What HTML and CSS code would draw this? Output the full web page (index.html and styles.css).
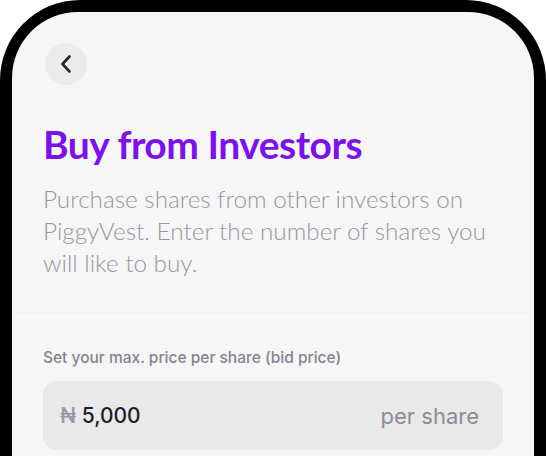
FILE: index.html
```html
<!DOCTYPE html>
<html>
<head>
<meta charset="utf-8">
<link rel="stylesheet" href="styles.css">
</head>
<body>
<div class="phone">
  <div class="screen">
    <div class="header">
      <button class="back" aria-label="Back">
        <svg width="14" height="20" viewBox="0 0 14 20"><path d="M10.5 2.5 L3.5 10 L10.5 17.5" fill="none" stroke="#232838" stroke-width="2.6" stroke-linecap="round" stroke-linejoin="round"/></svg>
      </button>
      <h1 class="title">Buy from Investors</h1>
      <p class="subtitle">Purchase shares from other investors on PiggyVest. Enter the number of shares you will like to buy.</p>
    </div>
    <div class="form">
      <label class="label">Set your max. price per share (bid price)</label>
      <div class="field">
        <span class="amount"><span class="naira">₦</span> 5,000</span>
        <span class="unit">per share</span>
      </div>
    </div>
  </div>
</div>
</body>
</html>
```
FILE: styles.css
```css
html, body {
  margin: 0;
  padding: 0;
  background: #ffffff;
  height: 100%;
  overflow: hidden;
}
.phone {
  background: #000;
  border-radius: 80px 80px 0 0;
  padding: 12px 12px 0 12px;
  height: 456px;
  box-sizing: border-box;
}
.screen {
  background: #f6f6f6;
  border-radius: 66px 66px 0 0;
  height: 100%;
  overflow: hidden;
}
.header {
  padding: 31px 31px 0 31px;
  height: 301px;
  box-sizing: border-box;
  border-bottom: 1px solid #f1f1f1;
}
.back {
  width: 42px;
  height: 42px;
  border-radius: 50%;
  border: none;
  background: #ebebeb;
  display: flex;
  align-items: center;
  justify-content: center;
  padding: 0;
  margin: 0 0 0 2px;
}
.title {
  margin: 35px 0 0 0;
  font-family: "Lato", sans-serif;
  font-weight: 700;
  font-size: 39px;
  line-height: 48px;
  color: #7b12e6;
  letter-spacing: -0.5px;
}
.subtitle {
  margin: 15px 0 0 0;
  font-family: "Lato", sans-serif;
  font-weight: 300;
  font-size: 24.3px;
  line-height: 32px;
  color: #9896a3;
  width: 470px;
}
.form {
  padding: 36px 31px 0 31px;
  display: flex;
  flex-direction: column;
  gap: 14px;
}
.label {
  font-family: "Inter", sans-serif;
  font-size: 15.5px;
  font-weight: 500;
  color: #858391;
  line-height: 18px;
}
.field {
  background: #e9e9e9;
  border-radius: 14px;
  height: 69px;
  display: flex;
  align-items: center;
  justify-content: space-between;
  padding: 0 24px 0 17px;
}
.amount {
  font-family: "Inter", sans-serif;
  font-size: 21px;
  font-weight: 500;
  color: #1d1d2b;
}
.naira {
  color: #9997a4;
}
.unit {
  font-family: "Inter", sans-serif;
  font-size: 22px;
  font-weight: 400;
  color: #8d8b98;
}
```
